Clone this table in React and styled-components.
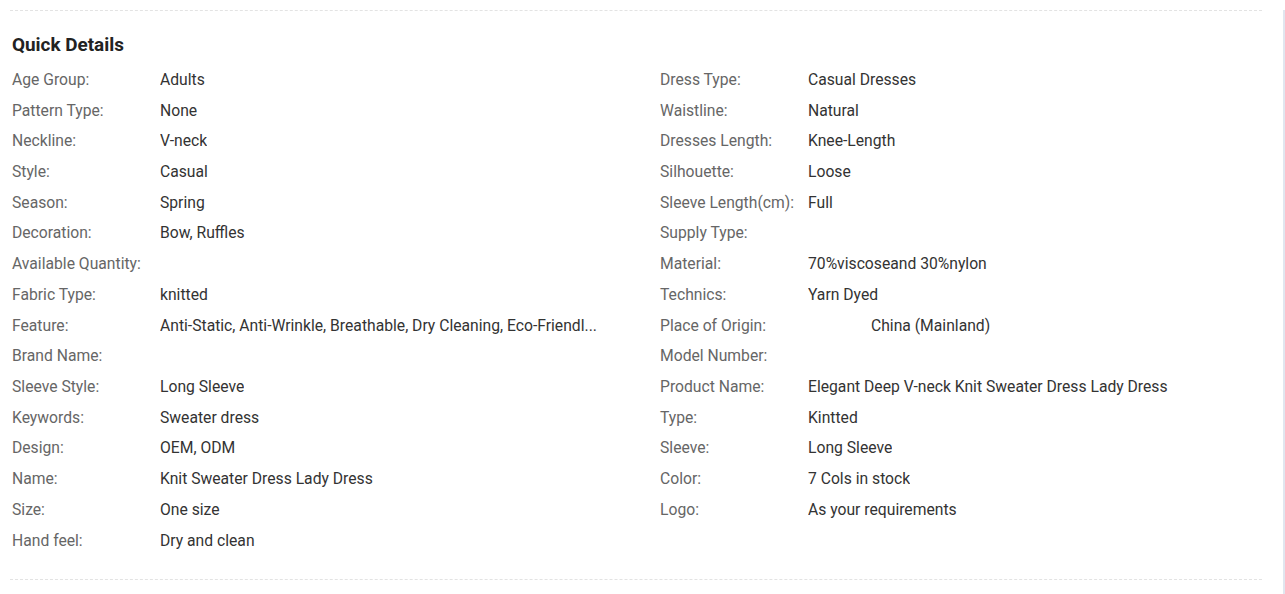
import React from 'react';
import styled, { createGlobalStyle } from 'styled-components';

const GlobalStyle = createGlobalStyle`
    html, body {
      margin: 0;
      padding: 0;
      background: #fff;
    }

    body {
      font-family: Roboto, 'Liberation Sans', Arial, sans-serif;
      -webkit-font-smoothing: antialiased;
    }
`;

const leftDetails = [
    ['Age Group:', 'Adults'],
    ['Pattern Type:', 'None'],
    ['Neckline:', 'V-neck'],
    ['Style:', 'Casual'],
    ['Season:', 'Spring'],
    ['Decoration:', 'Bow, Ruffles'],
    ['Available Quantity:', ''],
    ['Fabric Type:', 'knitted'],
    ['Feature:', 'Anti-Static, Anti-Wrinkle, Breathable, Dry Cleaning, Eco-Friendl...'],
    ['Brand Name:', ''],
    ['Sleeve Style:', 'Long Sleeve'],
    ['Keywords:', 'Sweater dress'],
    ['Design:', 'OEM, ODM'],
    ['Name:', 'Knit Sweater Dress Lady Dress'],
    ['Size:', 'One size'],
    ['Hand feel:', 'Dry and clean'],
];

const rightDetails = [
    ['Dress Type:', 'Casual Dresses'],
    ['Waistline:', 'Natural'],
    ['Dresses Length:', 'Knee-Length'],
    ['Silhouette:', 'Loose'],
    ['Sleeve Length(cm):', 'Full'],
    ['Supply Type:', ''],
    ['Material:', '70%viscoseand 30%nylon'],
    ['Technics:', 'Yarn Dyed'],
    ['Place of Origin:', 'China (Mainland)', true],
    ['Model Number:', ''],
    ['Product Name:', 'Elegant Deep V-neck Knit Sweater Dress Lady Dress'],
    ['Type:', 'Kintted'],
    ['Sleeve:', 'Long Sleeve'],
    ['Color:', '7 Cols in stock'],
    ['Logo:', 'As your requirements'],
];

const Page = styled.div`
    width: 1283px;
    height: 594px;
    border-right: 2px solid #e1e6ef;
`;

const Section = styled.section`
    width: 1252px;
    margin: 10px 0 0 10px;
    padding: 22px 0 23px 2px;
    box-sizing: border-box;
    border-top: 1px dashed #e3e3e3;
    border-bottom: 1px dashed #e3e3e3;
`;

const Title = styled.h3`
    margin: 0 0 7px;
    font-size: 18.9px;
    line-height: 24px;
    font-weight: 700;
    color: #222;
`;

const Columns = styled.div`
    display: grid;
    grid-template-columns: 648px 600px;
`;

const List = styled.dl`
    margin: 0;
`;

const Row = styled.div`
    display: flex;
    align-items: center;
    height: 30.73px;
    font-size: 15.7px;
`;

const Label = styled.dt`
    width: 148px;
    flex: none;
    color: #666;
    white-space: nowrap;
`;

const Value = styled.dd`
    margin: 0;
    max-width: 460px;
    color: #333;
    white-space: nowrap;
    overflow: hidden;
    text-overflow: ellipsis;
`;

const FlagSlot = styled.span`
    display: inline-block;
    width: 63px;
`;

function DetailList({ items }) {
    return (
        <List>
            {items.map(([label, value, flag]) => (
                <Row key={label}>
                    <Label>{label}</Label>
                    <Value>{flag && <FlagSlot />}{value}</Value>
                </Row>
            ))}
        </List>
    );
}

function App() {
    return (
        <>
        <GlobalStyle />
        <Page>
            <Section>
                <Title>Quick Details</Title>
                <Columns>
                    <DetailList items={leftDetails} />
                    <DetailList items={rightDetails} />
                </Columns>
            </Section>
        </Page>
        </>
    );
}

export default App;
